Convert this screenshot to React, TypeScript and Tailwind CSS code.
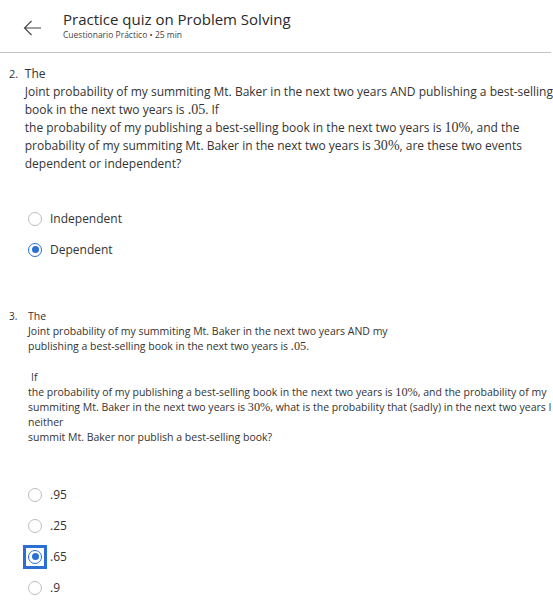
import React from "react";

const sans = { fontFamily: '"Open Sans", "Noto Sans", sans-serif' };

const M: React.FC<{ children: React.ReactNode }> = ({ children }) => (
  <span className="font-['Liberation_Serif',serif] text-[1.17em] leading-[0px]">{children}</span>
);

const Radio: React.FC<{ checked?: boolean; focused?: boolean; label: string }> = ({ checked, focused, label }) => (
  <div className="flex items-center h-[31px]">
    <div
      className={
        "flex items-center justify-center w-[24px] h-[24px] ml-[23px] mr-[3px] " +
        (focused ? "border-[3px] border-[#2b6fd3] bg-white" : "")
      }
    >
      {checked ? (
        <div className="w-[14px] h-[14px] rounded-full border-[1.5px] border-[#2b6fd3] flex items-center justify-center">
          <div className="w-[7px] h-[7px] rounded-full bg-[#2b6fd3]" />
        </div>
      ) : (
        <div className="w-[14px] h-[14px] rounded-full border-[1.5px] border-[#bdbdbd]" />
      )}
    </div>
    <span className="text-[12px] text-[#333]">{label}</span>
  </div>
);

export default function App() {
  return (
    <div className="w-[553px] min-h-[610px] overflow-hidden bg-white text-[#333]" style={sans}>
      <header className="flex items-start h-[53px] w-[551px] border-b border-[#c3c3c3]">
        <div className="pl-[23px] pt-[20px] w-[63px]">
          <svg width="19" height="16" viewBox="0 0 19 16" fill="none" stroke="#444" strokeWidth="1.1">
            <path d="M18 8H1.5M8.5 1L1.5 8l7 7" />
          </svg>
        </div>
        <div className="pt-[9px]">
          <div className="text-[15px] leading-[20px] text-[#2a2a2a]">Practice quiz on Problem Solving</div>
          <div className="text-[8.5px] leading-[12px] text-[#444]">Cuestionario Práctico • 25 min</div>
        </div>
      </header>

      <section className="flex pt-[12px]">
        <div className="w-[28px] pl-[9px] text-[11px] leading-[18px]">2.</div>
        <div className="text-[12px] leading-[18px] whitespace-nowrap">
          <div>The</div>
          <div>Joint probability of my summiting Mt. Baker in the next two years AND publishing a best-selling</div>
          <div>
            book in the next two years is <M>.05</M>. If
          </div>
          <div>
            the probability of my publishing a best-selling book in the next two years is <M>10%</M>, and the
          </div>
          <div>
            probability of my summiting Mt. Baker in the next two years is <M>30%</M>, are these two events
          </div>
          <div>dependent or independent?</div>
        </div>
      </section>

      <div className="pt-[30px]">
        <Radio label="Independent" />
        <Radio checked label="Dependent" />
      </div>

      <section className="flex pt-[44px]">
        <div className="w-[28px] pl-[9px] text-[10px] leading-[15px]">3.</div>
        <div className="text-[10.5px] leading-[15px] whitespace-nowrap">
          <div>The</div>
          <div>Joint probability of my summiting Mt. Baker in the next two years AND my</div>
          <div>
            publishing a best-selling book in the next two years is <M>.05</M>.
          </div>
          <div className="h-[15px]" />
          <div className="pl-[3px] pt-[1px]">If</div>
          <div>
            the probability of my publishing a best-selling book in the next two years is <M>10%</M>, and the probability of my
          </div>
          <div>
            summiting Mt. Baker in the next two years is <M>30%</M>, what is the probability that (sadly) in the next two years I
          </div>
          <div>neither</div>
          <div>summit Mt. Baker nor publish a best-selling book?</div>
        </div>
      </section>

      <div className="pt-[34px]">
        <Radio label=".95" />
        <Radio label=".25" />
        <Radio checked focused label=".65" />
        <Radio label=".9" />
      </div>
    </div>
  );
}
